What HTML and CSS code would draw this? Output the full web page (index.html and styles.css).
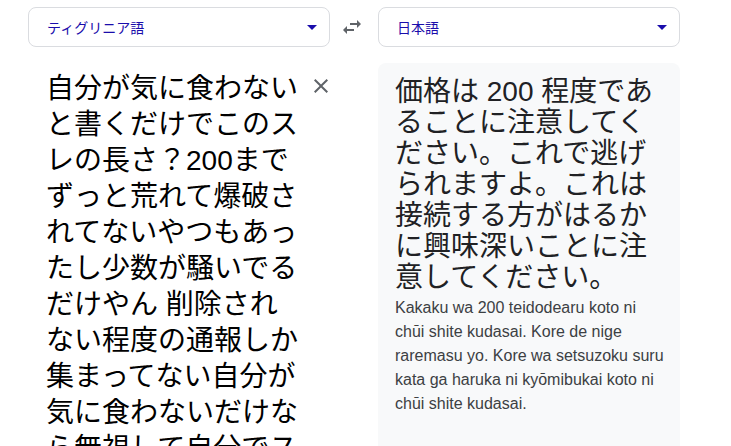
FILE: index.html
```html
<!DOCTYPE html>
<html lang="ja">
  <head>
    <meta charset="UTF-8">
    <title>翻訳</title>
    <link rel="stylesheet" href="styles.css">
  </head>
  <body>
    <div class="traducteur">
      <div class="langue langue-source">
        <span class="langue-nom">ティグリニア語</span>
        <span class="fleche"></span>
      </div>
      <button class="echanger" aria-label="言語を入れ替え">
        <svg viewBox="0 0 24 24" width="24" height="24"><path d="M6.99 11L3 15l3.990 4v-3H14v-2H6.99v-3zM21 9l-3.99-4v3H10v2h7.01v3L21 9z"/></svg>
      </button>
      <div class="langue langue-cible">
        <span class="langue-nom">日本語</span>
        <span class="fleche"></span>
      </div>

      <div class="panneau panneau-source">
        <div class="texte-source">自分が気に食わないと書くだけでこのスレの長さ？200までずっと荒れて爆破されてないやつもあったし少数が騒いでるだけやん 削除されない程度の通報しか集まってない自分が気に食わないだけなら無視して自分でスレ立てればいいじゃん</div>
        <button class="effacer" aria-label="テキストを消去">
          <svg viewBox="0 0 24 24" width="24" height="24"><path d="M19 6.41L17.59 5 12 10.59 6.41 5 5 6.41 10.59 12 5 17.59 6.41 19 12 13.41 17.59 19 19 17.59 13.41 12z"/></svg>
        </button>
      </div>
      <div class="panneau panneau-cible">
        <div class="texte-cible">価格は 200 程度であることに注意してください。これで逃げられますよ。これは接続する方がはるかに興味深いことに注意してください。</div>
        <div class="romanisation">Kakaku wa 200 teidodearu koto ni chūi shite kudasai. Kore de nige raremasu yo. Kore wa setsuzoku suru kata ga haruka ni kyōmibukai koto ni chūi shite kudasai.</div>
      </div>
    </div>
  </body>
</html>
```

FILE: styles.css
```css
html {
  background: #fff;
}
body {
  margin: 0;
  font-family: "Liberation Sans", "Noto Sans CJK JP", sans-serif;
  color: #202124;
  overflow: hidden;
  height: 446px;
}
.traducteur {
  display: grid;
  grid-template-columns: 302px 48px 302px;
  grid-template-rows: 40px auto;
  row-gap: 16px;
  padding: 7px 0 0 28px;
}
.langue {
  display: flex;
  align-items: center;
  justify-content: space-between;
  border: 1px solid #dadce0;
  border-radius: 8px;
  padding: 0 12px 0 18px;
  font-size: 14px;
  color: #1a0dab;
}
.fleche {
  width: 0;
  height: 0;
  border-left: 5px solid transparent;
  border-right: 5px solid transparent;
  border-top: 5px solid #1a0dab;
}
.echanger,
.effacer {
  border: 0;
  background: none;
  padding: 0;
  width: 24px;
  height: 24px;
  fill: #5f6368;
}
.echanger {
  align-self: center;
  justify-self: center;
  margin-right: 4px;
  margin-top: -1px;
}
.echanger svg,
.effacer svg {
  display: block;
}
.panneau-source {
  grid-column: 1;
  display: flex;
  align-items: flex-start;
  padding: 8px 0 0 18px;
}
.texte-source {
  flex-shrink: 0;
  width: 254px;
  font-size: 28px;
  line-height: 36px;
  color: #000;
}
.effacer {
  margin: 3px 0 0 9px;
  flex-shrink: 0;
}
.panneau-cible {
  grid-column: 3;
  background: #f8f9fa;
  border-radius: 8px;
  padding: 13px 13px 40px 17px;
  min-height: 400px;
}
.texte-cible {
  font-size: 28px;
  line-height: 31px;
}
.romanisation {
  margin-top: 3px;
  font-size: 16px;
  line-height: 24px;
  color: #3c4043;
}
```
